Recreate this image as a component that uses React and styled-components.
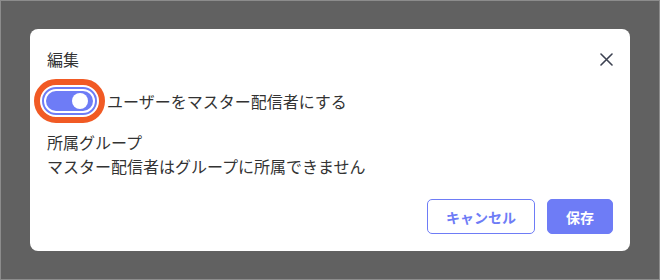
import React, { useState } from 'react';
import styled, { createGlobalStyle } from 'styled-components';

const GlobalStyle = createGlobalStyle`
  html, body {
    margin: 0;
    padding: 0;
    background: #616161;
  }
  * { box-sizing: border-box; }
`;

const Backdrop = styled.div`
  width: 660px;
  height: 280px;
  border: 1px solid #8c8c8c;
  background: #616161;
  display: flex;
  align-items: center;
  justify-content: center;
  font-family: "Noto Sans CJK JP", "Noto Sans", sans-serif;
  color: #333333;
`;

const Dialog = styled.div`
  width: 600px;
  height: 222px;
  background: #ffffff;
  border-radius: 8px;
  padding: 18px 17px 17px 17px;
  display: flex;
  flex-direction: column;
`;

const Header = styled.div`
  display: flex;
  align-items: center;
  justify-content: space-between;
  height: 24px;
`;

const Title = styled.h2`
  margin: 0;
  font-size: 16px;
  font-weight: 400;
  color: #333333;
`;

const Close = styled.button`
  border: none;
  background: none;
  padding: 0;
  width: 20px;
  height: 20px;
  display: flex;
  align-items: center;
  justify-content: center;
  margin-right: -3px;
  cursor: pointer;
`;

const ToggleRow = styled.label`
  display: flex;
  align-items: center;
  gap: 2px;
  margin-top: 8px;
  margin-left: -13px;
  font-size: 16px;
  line-height: 24px;
`;

const FocusRing = styled.span`
  display: inline-flex;
  border: 6px solid #f15a24;
  border-radius: 24px;
  padding: 2px;
  background: #ffffff;
`;

const Track = styled.span`
  display: inline-block;
  width: 55px;
  height: 28px;
  border-radius: 14px;
  border: 2px solid ${p => (p.$on ? '#6e7cf6' : '#bbbbbb')};
  padding: 2px;
  background: #ffffff;
`;

const Fill = styled.span`
  display: flex;
  align-items: center;
  justify-content: ${p => (p.$on ? 'flex-end' : 'flex-start')};
  width: 100%;
  height: 100%;
  border-radius: 10px;
  background: ${p => (p.$on ? '#6e7cf6' : '#cccccc')};
  padding: 0 5px;
`;

const Knob = styled.span`
  width: 16px;
  height: 16px;
  border-radius: 50%;
  background: #ffffff;
`;

const Field = styled.div`
  margin-top: 7px;
  font-size: 16px;
  line-height: 24px;
`;

const Footer = styled.div`
  margin-top: auto;
  display: flex;
  justify-content: flex-end;
  gap: 12px;
`;

const Button = styled.button`
  height: 35px;
  padding: 0 18px;
  min-width: ${p => (p.$primary ? '65px' : '108px')};
  border-radius: 5px;
  font-family: "Noto Sans CJK JP", "Noto Sans", sans-serif;
  font-size: 14px;
  font-weight: 700;
  cursor: pointer;
  border: 1px solid #6e7cf6;
  background: ${p => (p.$primary ? '#6e7cf6' : '#ffffff')};
  color: ${p => (p.$primary ? '#ffffff' : '#6e7cf6')};
`;

export default function App() {
  const [on, setOn] = useState(true);
  return (
    <>
      <GlobalStyle />
      <Backdrop>
        <Dialog>
          <Header>
            <Title>編集</Title>
            <Close aria-label="閉じる">
              <svg width="13" height="13" viewBox="0 0 13 13">
                <path d="M1 1L12 12M12 1L1 12" stroke="#3d4251" strokeWidth="1.6" strokeLinecap="round" />
              </svg>
            </Close>
          </Header>
          <ToggleRow onClick={() => setOn(!on)}>
            <FocusRing>
              <Track $on={on}>
                <Fill $on={on}>
                  <Knob />
                </Fill>
              </Track>
            </FocusRing>
            ユーザーをマスター配信者にする
          </ToggleRow>
          <Field>
            所属グループ
            <br />
            マスター配信者はグループに所属できません
          </Field>
          <Footer>
            <Button>キャンセル</Button>
            <Button $primary>保存</Button>
          </Footer>
        </Dialog>
      </Backdrop>
    </>
  );
}
